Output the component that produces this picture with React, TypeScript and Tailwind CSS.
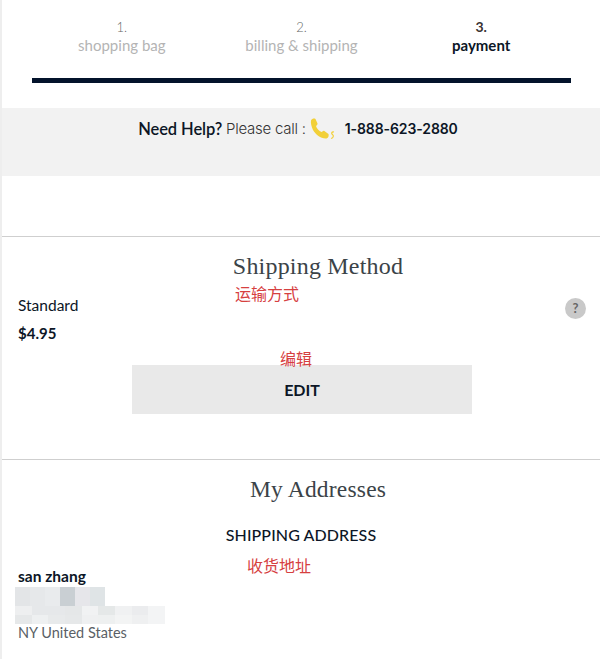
import React from 'react';

const steps = [
  { num: '1.', label: 'shopping bag', active: false },
  { num: '2.', label: 'billing & shipping', active: false },
  { num: '3.', label: 'payment', active: true },
];

const mosaicTop = ['#e3e5e7', '#e6e8ea', '#e9ebed', '#c9cfd3', '#e6e6ea', '#dfe4e6'];
const mosaicBottom = [
  ['#eeeff0', '#e6e8ea', '#e6e8ea', '#e5e7e8', '#f1f2f3', '#e5e8e8', '#f0f1f2', '#ebecee', '#f3f4f5'],
  ['#e6e8e9', '#eef0f1', '#e8eaeb', '#e6e8e9', '#eff0f1', '#eef0f0', '#f3f4f4', '#eff0f1', '#f3f4f5'],
];

function PhoneIcon() {
  return (
    <svg width="28" height="26" viewBox="0 0 28 26" className="ml-[3px] mr-[8px]">
      <path
        d="M2 3.500 C3 1.500 5.500 1 6.500 2 L8.500 6.500 C8.800 7.500 7.800 8.300 7 9 C7.500 11 10 14 12.500 15 C13.500 14.500 14 13.500 15 13.700 L19.500 17 C20 18.500 19.500 21 17.500 21.500 C12 22 7 18 4 13 C2.500 10 1.500 6 2 3.500 Z"
        fill="#f2d039"
      />
      <path d="M25 15 C22.500 14.500 22 16.500 23.500 17.500 C25 18.500 24.500 21 22 21.500" fill="none" stroke="#f2d039" strokeWidth="1.200" />
    </svg>
  );
}

function Note({ text, className }: { text: string; className: string }) {
  return (
    <span className={`absolute text-[16px] leading-[20px] text-[#d6403f] font-['Noto_Sans_CJK_SC',sans-serif] ${className}`}>
      {text}
    </span>
  );
}

export default function App() {
  return (
    <div className="relative w-[600px] h-[659px] overflow-hidden bg-white border-l-2 border-[#eeeeee] font-['Lato',sans-serif] text-[#0c1626]">
      <div className="w-[539px] ml-[30px] pt-[18px]">
        <div className="grid grid-cols-3 h-[60px] text-center text-[15px] leading-[18px]">
          {steps.map(step => (
            <div key={step.num}>
              <div className={step.active ? 'font-bold text-[#3a3232] text-[14px]' : 'text-[#666666] text-[13px] font-light'}>{step.num}</div>
              <div className={step.active ? 'font-bold text-[#0c1626]' : 'text-[#b4b4b4]'}>{step.label}</div>
            </div>
          ))}
        </div>
        <div className="h-[5px] bg-[#03132b]" />
      </div>

      <div className="mt-[25px] h-[68px] bg-[#f2f2f2] flex justify-center items-start pt-[9px] pr-[6px] font-['Inter',sans-serif] text-[15px] leading-[24px]">
        <span className="font-semibold tracking-[-0.1px] font-['Lato',sans-serif] text-[16.500px]">Need Help?</span>
        <span className="ml-[4px] font-light text-[#333333] tracking-[-0.25px]">Please call :</span>
        <PhoneIcon />
        <span className="font-semibold tracking-[-0.1px] text-[14px]">1-888-623-2880</span>
      </div>

      <section className="mt-[60px] h-[223px] border-t border-[#cfcfcf]">
        <h2 className="pt-[14px] pl-[34px] text-center font-['Liberation_Serif',serif] text-[24px] leading-[30px] font-normal text-[#3b4348] tracking-[0.2px]">
          Shipping Method
        </h2>
        <div className="flex justify-between mt-[14px] pl-[16px] pr-[14px]">
          <div>
            <div className="text-[15.500px] leading-[20px]">Standard</div>
            <div className="mt-[8px] text-[15px] leading-[20px] font-bold">$4.95</div>
          </div>
          <div className="mt-[3px] w-[21px] h-[21px] rounded-full bg-[#c9c9c9] text-[#666666] text-[13px] font-bold leading-[21px] text-center">?</div>
        </div>
        <button className="block mt-[22px] ml-[130px] w-[340px] h-[49px] bg-[#e9e9e9] text-[16px] font-bold text-center">EDIT</button>
      </section>

      <section className="border-t border-[#cfcfcf]">
        <h2 className="pt-[14px] pl-[34px] text-center font-['Liberation_Serif',serif] text-[23.500px] leading-[30px] font-normal text-[#3b4348] tracking-[0.2px]">
          My Addresses
        </h2>
        <div className="mt-[21px] text-center text-[16px] leading-[20px] font-medium tracking-[0.1px]">SHIPPING ADDRESS</div>
        <div className="mt-[21px] pl-[16px] text-[15.500px] leading-[21px] font-bold">san zhang</div>
        <div className="ml-[13px] flex w-[90px] h-[19px]">
          {mosaicTop.map((c, i) => (
            <div key={i} className="flex-1" style={{ backgroundColor: c }} />
          ))}
        </div>
        <div className="ml-[13px] w-[150px] h-[18px] flex flex-col">
          {mosaicBottom.map((row, r) => (
            <div key={r} className="flex flex-1">
              {row.map((c, i) => (
                <div key={i} className="flex-1" style={{ backgroundColor: c }} />
              ))}
            </div>
          ))}
        </div>
        <div className="pl-[16px] text-[14.500px] leading-[18px] text-[#5a5f66]">NY United States</div>
      </section>

      <Note text="运输方式" className="left-[233px] top-[283px]" />
      <Note text="编辑" className="left-[278px] top-[348px]" />
      <Note text="收货地址" className="left-[245px] top-[555px]" />
    </div>
  );
}
